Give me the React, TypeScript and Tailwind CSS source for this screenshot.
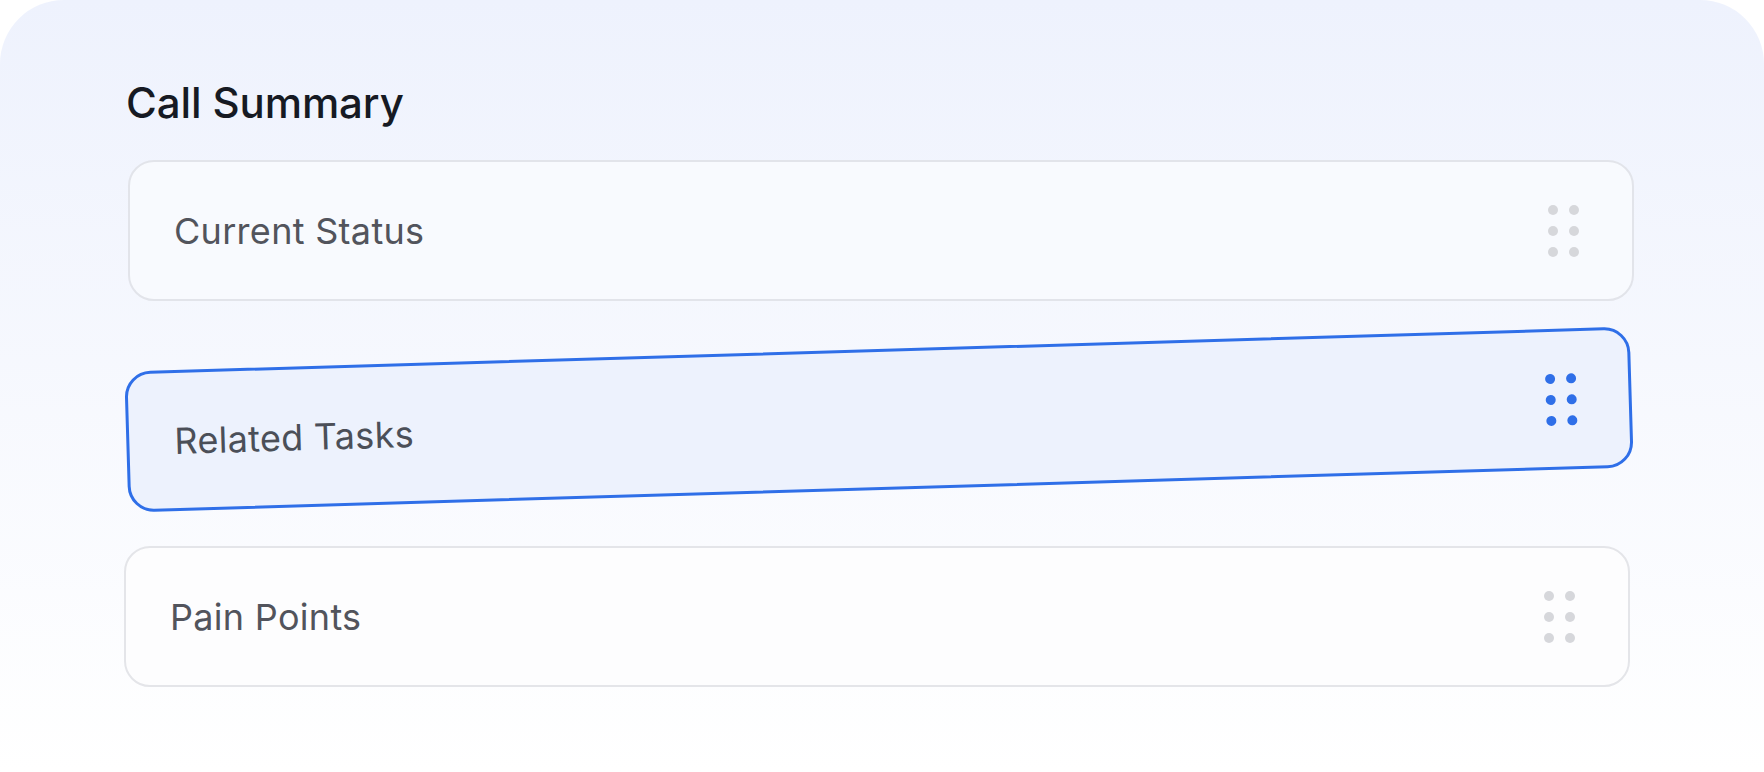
const ITEMS = [
  { id: "status", label: "Current Status" },
  { id: "tasks", label: "Related Tasks" },
  { id: "pain", label: "Pain Points" },
];

function GripDots({ active }: { active?: boolean }) {
  return (
    <div className="grid grid-cols-2 gap-[11px]">
      {Array.from({ length: 6 }).map((_, i) => (
        <span
          key={i}
          className={
            active
              ? "block h-[10px] w-[10px] rounded-full bg-[#2f6fe8]"
              : "block h-[10px] w-[10px] rounded-full bg-[#d6d7db]"
          }
        />
      ))}
    </div>
  );
}

function SummaryRow({ label, state }: { label: string; state: "idle" | "dragging" | "below" | "above" }) {
  if (state === "dragging") {
    return (
      <div className="flex h-[141px] -translate-y-[4px] rotate-[-1.71deg] items-center justify-between rounded-[26px] border-[3px] border-[#2f6fe8] bg-[#edf2fd] pl-[45px] pr-[52px]">
        <span className="text-[36px] tracking-[0.3px] text-[#4b4f58]">{label}</span>
        <GripDots active />
      </div>
    );
  }

  return (
    <div
      className={
        state === "above"
          ? "flex h-[141px] translate-x-[2px] items-center justify-between rounded-[26px] border-2 border-[#e2e4ea] bg-[#f8fafe] pl-[44px] pr-[53px]"
          : "flex h-[141px] -translate-x-[2px] items-center justify-between rounded-[26px] border-2 border-[#e4e5e9] bg-[#fdfdfe] pl-[44px] pr-[53px]"
      }
    >
      <span className="text-[36px] tracking-[0.3px] text-[#52545c]">{label}</span>
      <GripDots />
    </div>
  );
}

export default function App() {
  return (
    <div
      className="h-[772px] w-full overflow-hidden bg-white"
      style={{ fontFamily: "Inter, 'Noto Sans', sans-serif" }}
    >
      <div className="h-full rounded-t-[64px] bg-gradient-to-b from-[#eef2fd] to-white pl-[126px] pr-[132px] pt-[74px]">
        <h2 className="text-[42px] leading-[58px] font-medium tracking-[-0.1px] text-[#161a23]">
          Call Summary
        </h2>
        <div className="mt-[28px] flex flex-col gap-[52px]">
          <SummaryRow label={ITEMS[0].label} state="above" />
          <SummaryRow label={ITEMS[1].label} state="dragging" />
          <SummaryRow label={ITEMS[2].label} state="below" />
        </div>
      </div>
    </div>
  );
}
